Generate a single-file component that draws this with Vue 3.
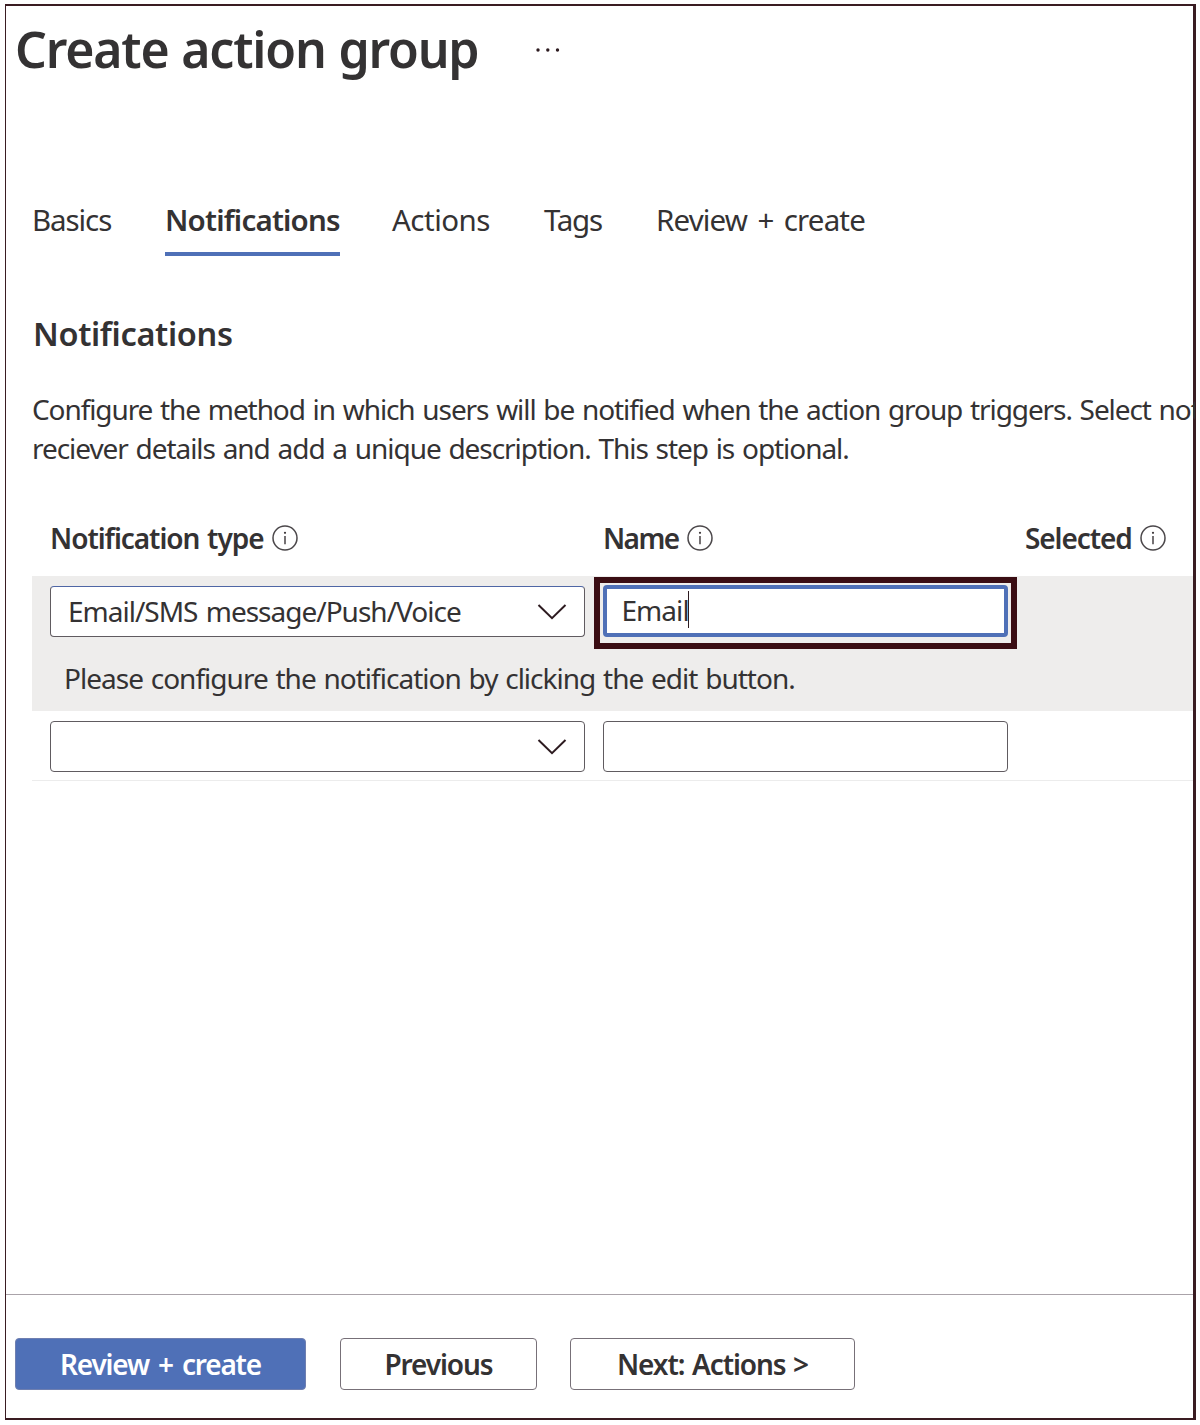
<script setup>
const tabs = [
  { label: 'Basics', cls: 'basics' },
  { label: 'Notifications', cls: 'active' },
  { label: 'Actions', cls: 'actions' },
  { label: 'Tags', cls: 'tags' },
  { label: 'Review + create', cls: 'review' },
]
const columns = [
  { label: 'Notification type', cls: 'type' },
  { label: 'Name', cls: 'name' },
  { label: 'Selected', cls: 'selected' },
]
</script>

<template>
  <div class="page">
    <div class="blade">
      <header class="title-bar">
        <h1>Create action group</h1>
        <svg class="more" width="26" height="6" viewBox="0 0 26 6">
          <circle cx="3" cy="3" r="1.7" /><circle cx="12.8" cy="3" r="1.7" /><circle cx="22.5" cy="3" r="1.7" />
        </svg>
      </header>

      <nav class="tabs">
        <div v-for="t in tabs" :key="t.label" class="tab" :class="t.cls"><span>{{ t.label }}</span></div>
      </nav>

      <main class="content">
        <h2>Notifications</h2>
        <div class="desc">
          <div class="line1">Configure the method in which users will be notified when the action group triggers. Select not</div>
          <div class="line2">reciever details and add a unique description. This step is optional.</div>
        </div>

        <div class="heads">
          <div v-for="c in columns" :key="c.label" class="head">
            <span :class="c.cls">{{ c.label }}</span>
            <svg width="26" height="26" viewBox="0 0 26 26">
              <circle cx="13" cy="13" r="12" fill="none" stroke="#4b474a" stroke-width="1.5" />
              <circle cx="13" cy="7.8" r="1.1" fill="#3b3538" />
              <path d="M13 11v8.2" stroke="#3b3538" stroke-width="1.4" />
            </svg>
          </div>
        </div>

        <section class="entry">
          <div class="fields">
            <div class="box select first">
              <span class="value">Email/SMS message/Push/Voice</span>
              <svg class="chevron" width="30" height="18" viewBox="0 0 30 18"><path d="M1.5 2 15 15.2 28.5 2" /></svg>
            </div>
            <div class="callout">
              <div class="input focused"><span class="email">Email</span><i class="caret"></i></div>
            </div>
          </div>
          <p class="hint">Please configure the notification by clicking the edit button.</p>
        </section>

        <section class="blank">
          <div class="box select">
            <svg class="chevron" width="30" height="18" viewBox="0 0 30 18"><path d="M1.5 2 15 15.2 28.5 2" /></svg>
          </div>
          <div class="box name-box"></div>
        </section>
      </main>

      <footer class="footer">
        <button class="primary">Review + create</button>
        <button class="previous">Previous</button>
        <button class="next">Next: Actions &gt;</button>
      </footer>
    </div>
  </div>
</template>

<style>
body { margin: 0; background: #fff; }
</style>

<style scoped>
* { box-sizing: border-box; }
.page {
  width: 1200px;
  height: 1425px;
  padding: 4px 4px 4px 5px;
  overflow: hidden;
  color: #343233;
  font-family: "Noto Sans", "Open Sans", sans-serif;
  background: #fff;
}
.blade {
  display: flex;
  flex-direction: column;
  width: 1191px;
  height: 1416px;
  border: 2px solid #3a1c22;
  border-right-width: 3px;
  border-left-width: 1.5px;
}
h1, h2, p { margin: 0; }
.title-bar { display: flex; height: 176px; padding: 13.4px 0 0 9px; }
h1 { width: 520px; font-size: 50px; line-height: 60px; font-weight: 600; letter-spacing: -1.2px; word-spacing: 1px; white-space: nowrap; }
.more { margin-top: 28px; fill: #2d1b20; }

.tabs {
  display: grid;
  grid-template-columns: 133px 227px 152px 111px auto;
  height: 75px;
  margin-left: 26px;
  font-size: 29.5px;
  line-height: 76px;
  white-space: nowrap;
}
.tab { height: 74px; }
.basics { letter-spacing: -1.1px; }
.active { width: 175px; font-weight: 600; letter-spacing: -.8px; border-bottom: 4px solid #4f70b7; }
.actions { letter-spacing: -.5px; }
.tags { letter-spacing: -1.24px; }
.review { padding-left: 1px; letter-spacing: -.85px; word-spacing: 3.5px; }

.content { flex: 1; padding-left: 26px; }
h2 { height: 133px; padding: 55.5px 0 0 1px; font-size: 32.5px; line-height: 42px; font-weight: 600; letter-spacing: -.34px; }
.desc { height: 117px; font-size: 28px; line-height: 38.5px; white-space: nowrap; }
.line1 { width: 1163px; overflow: hidden; letter-spacing: -1.09px; word-spacing: 1.6px; }
.line2 { letter-spacing: -1.06px; word-spacing: 1.6px; }

.heads {
  display: grid;
  grid-template-columns: 553px 422px auto;
  height: 69px;
  padding: 11px 0 0 18px;
}
.head { display: flex; height: 40px; font-size: 28px; line-height: 40px; font-weight: 600; white-space: nowrap; gap: 8px; }
.head svg { flex: none; margin-top: 7px; }
.head .type { width: 214px; letter-spacing: -1.05px; word-spacing: 1.5px; }
.head .name { width: 76px; letter-spacing: -1.6px; }
.head .selected { width: 107px; letter-spacing: -1.1px; }

.entry { width: 1161px; height: 135px; background: #eeedec; }
.fields { display: flex; height: 73px; padding-left: 18px; gap: 9px; }
.box { height: 51px; border: 1.5px solid #605b60; border-radius: 4px; background: #fff; }
.select { display: flex; align-items: center; width: 535px; padding: 0 17px; font-size: 28px; }
.first { margin-top: 10px; border-top-color: #4f66a5; }
.value { padding-bottom: 2px; letter-spacing: -1px; word-spacing: 2px; line-height: 46px; white-space: nowrap; }
.chevron { margin-left: auto; fill: none; stroke: #2d1b20; stroke-width: 2; }
.callout { width: 423px; height: 72px; margin-top: 1px; border: 6px solid #3a0d13; padding: 2px 3px; background: #eeedec; }
.input {
  display: flex;
  align-items: center;
  width: 405px;
  height: 52px;
  padding-left: 14.5px;
  border: 4px solid #4f70b7;
  border-radius: 4px;
  background: #fff;
  font-size: 28px;
}
.email { width: 66px; padding-bottom: 2px; letter-spacing: -.95px; line-height: 42px; white-space: nowrap; }
.caret { width: 1.5px; height: 37px; margin-bottom: 3px; background: #2d1b20; }
.hint { padding: 9px 0 0 32px; font-size: 28px; line-height: 40px; letter-spacing: -.98px; word-spacing: 1.4px; white-space: nowrap; }

.blank { display: flex; width: 1161px; height: 70px; padding: 10px 0 0 18px; gap: 18px; border-bottom: 1px solid #ececec; }
.name-box { width: 405px; }

.footer { display: flex; width: 1187px; height: 124px; padding: 43px 0 0 9px; border-top: 1.5px solid #aaa3a9; }
button {
  height: 52px;
  padding: 0 0 1px;
  border: 1.5px solid #777078;
  border-radius: 4px;
  background: #fff;
  color: #343233;
  font: 600 28px/48px "Noto Sans", "Open Sans", sans-serif;
  white-space: nowrap;
}
.primary { width: 291px; border-color: #6f7fb0; background: #4f70b7; color: #fff; letter-spacing: -1.2px; word-spacing: 3px; }
.previous { width: 197px; margin-left: 34px; letter-spacing: -1.1px; }
.next { width: 285px; margin-left: 33px; letter-spacing: -1.1px; word-spacing: 1.5px; }
</style>
